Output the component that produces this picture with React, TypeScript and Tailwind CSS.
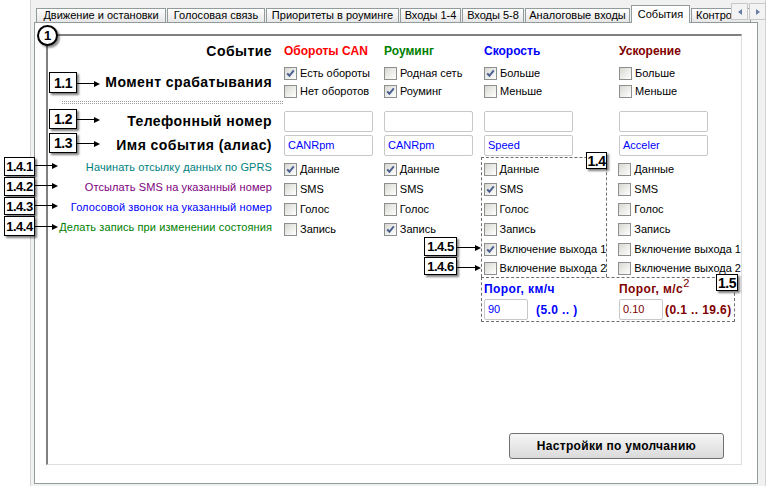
import React from 'react'

type Opt = { label: string; on?: boolean }

function Box({ on }: { on?: boolean }) {
  return (
    <span className="flex h-[13px] w-[13px] shrink-0 items-center justify-center border border-[#8e8f8f] bg-linear-to-br from-[#d8d8d2] to-white">
      {on && (
        <svg width="11" height="11" viewBox="0 0 11 11">
          <path d="M2.2 5.4 L4.4 7.8 L8.8 2.4" fill="none" stroke="#4b5f91" strokeWidth="2" />
        </svg>
      )}
    </span>
  )
}

function CheckRow({ label, on, h = 'h-[20px]' }: Opt & { h?: string }) {
  return (
    <div className={`flex items-center gap-[3px] whitespace-nowrap ${h}`}>
      <Box on={on} />
      <span>{label}</span>
    </div>
  )
}

function Field({ value, w = 'w-[89px]', tone = 'text-[#0000ff]' }: { value?: string; w?: string; tone?: string }) {
  return (
    <div className={`flex h-[21px] items-center rounded-[2px] border border-[#c8c8c8] bg-white px-[3px] ${w} ${tone}`}>
      {value}
    </div>
  )
}

function Callout({ text, pos }: { text: string; pos: string }) {
  return (
    <div
      className={`absolute flex items-center justify-center border border-black bg-white font-bold leading-none tracking-[-0.5px] shadow-[2px_2px_2px_rgba(0,0,0,0.5)] ${pos}`}
    >
      {text}
    </div>
  )
}

function Arrow({ pos }: { pos: string }) {
  return (
    <div className={`absolute flex h-[7px] items-center ${pos}`}>
      <div className="h-px flex-1 bg-black" />
      <div className="h-0 w-0 border-y-[3px] border-l-[6px] border-y-transparent border-l-black" />
    </div>
  )
}

const tabs = [
  { t: 'Движение и остановки', w: 'w-[130px]' },
  { t: 'Голосовая связь', w: 'w-[98px]' },
  { t: 'Приоритеты в роуминге', w: 'w-[133px]' },
  { t: 'Входы 1-4', w: 'w-[61px]' },
  { t: 'Входы 5-8', w: 'w-[62px]' },
  { t: 'Аналоговые входы', w: 'w-[105px]' },
]

const labelCol = 'w-[236px] shrink-0 pr-[12px] text-right'
const heading = 'font-bold text-[14px] tracking-[0.45px]'

export default function App() {
  return (
    <div className="relative flex h-[486px] w-[768px] overflow-hidden bg-white font-['Liberation_Sans',Arial,sans-serif] text-[11px] text-black">
      <div className="w-[30px] shrink-0" />
      <div className="flex w-[736px] flex-col border-x border-[#d4d4d4] bg-[#f1f1f1] pl-[3px]">
        {/* вкладки */}
        <div className="flex h-[22px] items-end gap-px pl-[2px]">
          {tabs.map((tab) => (
            <div
              key={tab.t}
              className={`flex h-[14px] shrink-0 items-center justify-center border border-b-0 border-[#919b9c] bg-linear-to-b from-white to-[#e6e6e6] leading-none whitespace-nowrap ${tab.w}`}
            >
              {tab.t}
            </div>
          ))}
          <div className="relative -mb-px flex h-[18px] w-[59px] shrink-0 items-center justify-center border border-b-0 border-[#919b9c] bg-white leading-none">
            События
          </div>
          <div className="flex h-[14px] w-[60px] shrink-0 items-center border border-b-0 border-[#919b9c] bg-linear-to-b from-white to-[#e6e6e6] pl-[4px] leading-none whitespace-nowrap">
            Контроль
          </div>
        </div>

        {/* панель */}
        <div className="h-[462px] w-[724px] border border-[#919b9c] bg-white pt-[11px] pr-[15px] pb-[18px] pl-[11px]">
          <div className="flex h-full flex-col border-t-2 border-r border-b border-l-2 border-t-[#808080] border-r-[#dedede] border-b-[#dedede] border-l-[#808080]">
            {/* заголовки */}
            <div className="mt-[7px] flex h-[16px] items-center font-bold text-[12px]">
              <div className={`${labelCol} ${heading}`}>Событие</div>
              <div className="w-[100px] text-[#ff0000]">Обороты CAN</div>
              <div className="w-[100px] text-[#008000]">Роуминг</div>
              <div className="w-[135px] text-[#0000ff]">Скорость</div>
              <div className="text-[#800000]">Ускорение</div>
            </div>

            {/* момент срабатывания */}
            <div className="mt-[5px] flex h-[36px] items-center">
              <div className={`${labelCol} ${heading}`}>Момент срабатывания</div>
              <div className="w-[100px]">
                <CheckRow label="Есть обороты" on h="h-[18px]" />
                <CheckRow label="Нет оборотов" h="h-[18px]" />
              </div>
              <div className="w-[100px]">
                <CheckRow label="Родная сеть" h="h-[18px]" />
                <CheckRow label="Роуминг" on h="h-[18px]" />
              </div>
              <div className="w-[135px]">
                <CheckRow label="Больше" on h="h-[18px]" />
                <CheckRow label="Меньше" h="h-[18px]" />
              </div>
              <div>
                <CheckRow label="Больше" h="h-[18px]" />
                <CheckRow label="Меньше" h="h-[18px]" />
              </div>
            </div>

            <div className="h-[9px] pt-[1px] pl-[14px]">
              <div className="h-[3px] w-[221px] border-y border-dotted border-[#9a9a9a]" />
            </div>

            {/* телефон */}
            <div className="flex h-[24px] items-center">
              <div className={`${labelCol} ${heading}`}>Телефонный номер</div>
              <div className="w-[100px]"><Field /></div>
              <div className="w-[100px]"><Field /></div>
              <div className="w-[135px]"><Field /></div>
              <Field />
            </div>

            {/* алиас */}
            <div className="flex h-[24px] items-center">
              <div className={`${labelCol} ${heading}`}>Имя события (алиас)</div>
              <div className="w-[100px]"><Field value="CANRpm" /></div>
              <div className="w-[100px]"><Field value="CANRpm" /></div>
              <div className="w-[135px]"><Field value="Speed" /></div>
              <Field value="Acceler" />
            </div>

            {/* действия */}
            <div className="flex h-[120px]">
              <div className={`${labelCol} tracking-[0.1px]`}>
                <div className="flex h-[20px] items-center justify-end text-[#008080]">Начинать отсылку данных по GPRS</div>
                <div className="flex h-[20px] items-center justify-end text-[#800080]">Отсылать SMS на указанный номер</div>
                <div className="flex h-[20px] items-center justify-end text-[#0000ff]">Голосовой звонок на указанный номер</div>
                <div className="flex h-[20px] items-center justify-end text-[#008000]">Делать запись при изменении состояния</div>
              </div>
              <div className="w-[100px] pt-[2px]">
                <CheckRow label="Данные" on />
                <CheckRow label="SMS" />
                <CheckRow label="Голос" />
                <CheckRow label="Запись" />
              </div>
              <div className="w-[100px] pt-[2px]">
                <CheckRow label="Данные" on />
                <CheckRow label="SMS" />
                <CheckRow label="Голос" />
                <CheckRow label="Запись" on />
              </div>
              <div className="w-[135px]">
                <div className="-ml-[3px] h-[120px] w-[126px] border-x border-t border-dashed border-[#6e6e6e] pt-px pl-[2px]">
                  <CheckRow label="Данные" />
                  <CheckRow label="SMS" on />
                  <CheckRow label="Голос" />
                  <CheckRow label="Запись" />
                  <CheckRow label="Включение выхода 1" on />
                  <CheckRow label="Включение выхода 2" h="h-[18px]" />
                </div>
              </div>
              <div className="pt-[2px]">
                <CheckRow label="Данные" />
                <CheckRow label="SMS" />
                <CheckRow label="Голос" />
                <CheckRow label="Запись" />
                <CheckRow label="Включение выхода 1" />
                <CheckRow label="Включение выхода 2" h="h-[18px]" />
              </div>
            </div>

            {/* пороги */}
            <div className="flex">
              <div className="w-[433px] shrink-0" />
              <div className="flex h-[45px] w-[254px] border border-dashed border-[#6e6e6e] pl-[2px] font-bold text-[12px] tracking-[0.4px]">
                <div className="w-[135px] text-[#0000ff]">
                  <div className="flex h-[21px] items-center">Порог, км/ч</div>
                  <div className="flex items-center gap-[8px]">
                    <Field value="90" w="w-[44px]" tone="font-normal text-[11px] tracking-normal text-[#0000ff]" />
                    <span>(5.0 .. )</span>
                  </div>
                </div>
                <div className="text-[#800000]">
                  <div className="flex h-[21px] items-center">
                    Порог, м/с<span className="relative -top-[5px] text-[11px] font-normal">2</span>
                  </div>
                  <div className="flex items-center gap-[2px]">
                    <Field value="0.10" w="w-[44px]" tone="font-normal text-[11px] tracking-normal text-[#800000]" />
                    <span>(0.1 .. 19.6)</span>
                  </div>
                </div>
              </div>
            </div>

            <div className="flex-1" />
            <div className="mr-[17px] mb-[5px] flex justify-end">
              <button className="h-[26px] w-[215px] rounded-[3px] border border-[#707070] bg-linear-to-b from-[#f6f6f6] to-[#dadada] font-bold text-[12px] tracking-[0.3px]">
                Настройки по умолчанию
              </button>
            </div>
          </div>
        </div>
      </div>

      {/* кнопки прокрутки вкладок */}
      <div className="absolute top-[3px] left-[731px] flex gap-px">
        <div className="flex h-[17px] w-[17px] items-center justify-center border border-[#c8c8c8] bg-[#f3f3f3]">
          <div className="h-0 w-0 border-y-[3px] border-r-[4px] border-y-transparent border-r-[#6a7ca6]" />
        </div>
        <div className="flex h-[17px] w-[17px] items-center justify-center border border-[#c8c8c8] bg-[#f3f3f3]">
          <div className="h-0 w-0 border-y-[3px] border-l-[4px] border-y-transparent border-l-[#6a7ca6]" />
        </div>
      </div>

      {/* выноски */}
      <div className="absolute top-[25px] left-[37px] flex h-[21px] w-[21px] items-center justify-center rounded-full border-2 border-black bg-white font-bold text-[13px] leading-none shadow-[2px_2px_2px_rgba(0,0,0,0.45)]">
        1
      </div>
      <Callout text="1.1" pos="left-[49px] top-[72px] w-[28px] h-[21px] text-[14px]" />
      <Arrow pos="left-[77px] top-[80px] w-[23px]" />
      <Callout text="1.2" pos="left-[49px] top-[109px] w-[28px] h-[20px] text-[14px]" />
      <Arrow pos="left-[77px] top-[116px] w-[23px]" />
      <Callout text="1.3" pos="left-[49px] top-[133px] w-[28px] h-[20px] text-[14px]" />
      <Arrow pos="left-[77px] top-[140px] w-[23px]" />

      <Callout text="1.4.1" pos="left-[4px] top-[157px] w-[31px] h-[19px] text-[13px]" />
      <Arrow pos="left-[35px] top-[162px] w-[23px]" />
      <Callout text="1.4.2" pos="left-[4px] top-[177px] w-[31px] h-[19px] text-[13px]" />
      <Arrow pos="left-[35px] top-[182px] w-[23px]" />
      <Callout text="1.4.3" pos="left-[4px] top-[197px] w-[31px] h-[18px] text-[13px]" />
      <Arrow pos="left-[35px] top-[202px] w-[23px]" />
      <Callout text="1.4.4" pos="left-[4px] top-[216px] w-[31px] h-[20px] text-[13px]" />
      <Arrow pos="left-[35px] top-[223px] w-[23px]" />

      <Callout text="1.4" pos="left-[586px] top-[152px] w-[21px] h-[17px] text-[14px]" />
      <Callout text="1.4.5" pos="left-[424px] top-[237px] w-[33px] h-[19px] text-[13px]" />
      <Arrow pos="left-[457px] top-[244px] w-[24px]" />
      <Callout text="1.4.6" pos="left-[424px] top-[257px] w-[33px] h-[18px] text-[13px]" />
      <Arrow pos="left-[457px] top-[264px] w-[24px]" />
      <Callout text="1.5" pos="left-[716px] top-[274px] w-[22px] h-[17px] text-[14px]" />
    </div>
  )
}
